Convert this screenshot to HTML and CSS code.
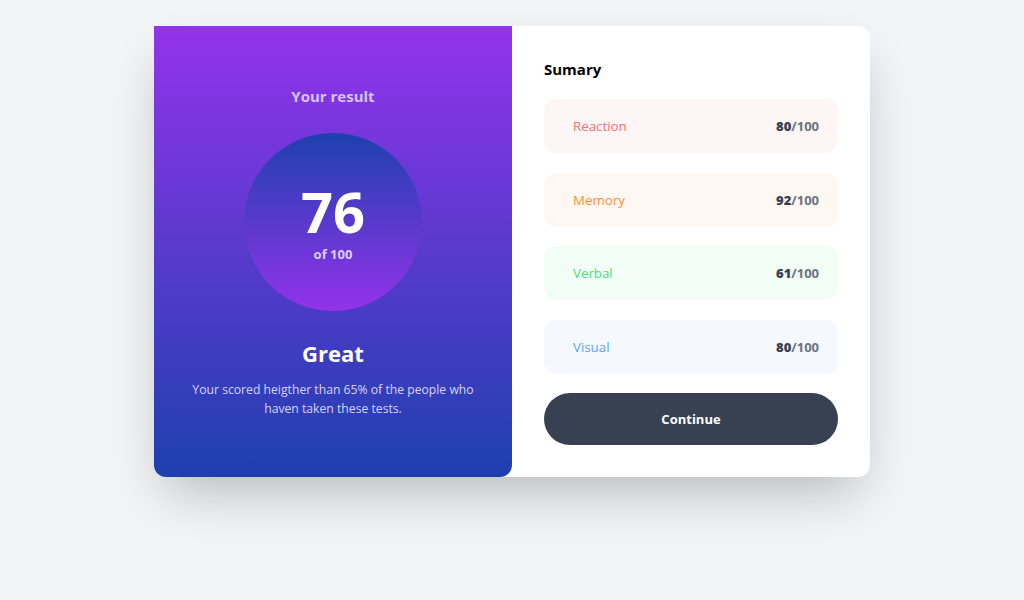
FILE: index.html
```html
<!DOCTYPE html>
<html lang="en">
<head>
<meta charset="utf-8">
<title>Results summary</title>
<link rel="stylesheet" href="styles.css">
</head>
<body>
<main class="page">
  <section class="card">
    <div class="result">
      <h2 class="result-title">Your result</h2>
      <div class="score-circle">
        <span class="score">76</span>
        <span class="score-of">of 100</span>
      </div>
      <h3 class="verdict">Great</h3>
      <p class="verdict-text">Your scored heigther than 65% of the people who haven taken these tests.</p>
    </div>
    <div class="summary">
      <h2 class="summary-title">Sumary</h2>
      <ul class="list">
        <li class="item item-red"><span class="label">Reaction</span><span class="value"><b>80</b>/100</span></li>
        <li class="item item-orange"><span class="label">Memory</span><span class="value"><b>92</b>/100</span></li>
        <li class="item item-green"><span class="label">Verbal</span><span class="value"><b>61</b>/100</span></li>
        <li class="item item-blue"><span class="label">Visual</span><span class="value"><b>80</b>/100</span></li>
      </ul>
      <button class="continue">Continue</button>
    </div>
  </section>
</main>
</body>
</html>
```

FILE: styles.css
```css
* { box-sizing: border-box; }
html, body { margin: 0; padding: 0; }
body {
  background: #f3f4f6;
  font-family: "Open Sans", "Noto Sans", "Liberation Sans", sans-serif;
  width: 1024px;
  height: 600px;
}
.page {
  display: flex;
  justify-content: center;
  padding-top: 26px;
}
.card {
  width: 716px;
  height: 451px;
  display: flex;
  background: #fff;
  border-radius: 0 12px 12px 12px;
  box-shadow: 0 25px 50px -12px rgba(0, 0, 0, 0.25);
}
.result {
  width: 358px;
  background: linear-gradient(to bottom, #9333ea, #1e40af);
  border-radius: 0 0 12px 12px;
  display: flex;
  flex-direction: column;
  align-items: center;
  padding-top: 60px;
}
.result-title {
  margin: 0;
  font-size: 15px;
  font-weight: 700;
  line-height: 20px;
  color: #d8c3f8;
}
.score-circle {
  width: 178px;
  height: 178px;
  border-radius: 50%;
  margin-top: 27px;
  background: linear-gradient(to bottom, #1e40af, #9333ea);
  display: flex;
  flex-direction: column;
  align-items: center;
  justify-content: center;
}
.score {
  font-size: 56px;
  font-weight: 700;
  color: #fff;
  line-height: 60px;
}
.score-of {
  font-size: 13px;
  font-weight: 700;
  color: #ddd0fb;
  line-height: 18px;
  margin-top: 4px;
}
.verdict {
  margin: 27px 0 0;
  font-size: 22px;
  font-weight: 700;
  color: #fff;
  line-height: 30px;
}
.verdict-text {
  margin: 12px 0 0;
  width: 300px;
  text-align: center;
  font-size: 12.2px;
  line-height: 19px;
  color: #d9d2f6;
}
.summary {
  flex: 1;
  padding: 32px 32px 32px 32px;
  display: flex;
  flex-direction: column;
}
.summary-title {
  margin: 0;
  font-size: 15px;
  font-weight: 700;
  line-height: 22px;
  color: #000;
}
.list {
  list-style: none;
  margin: 19px 0 0;
  padding: 0;
  display: flex;
  flex-direction: column;
  gap: 19.5px;
}
.item {
  height: 54px;
  border-radius: 12px;
  display: flex;
  align-items: center;
  justify-content: space-between;
  padding: 0 19px 0 29px;
  font-size: 13.3px;
}
.label { line-height: 18px; }
.value {
  font-weight: 700;
  color: #6b7280;
  font-size: 13px;
}
.value b { color: #374151; }
.item-red { background: #fef6f6; }
.item-red .label { color: #f87171; }
.item-orange { background: #fff7f2; }
.item-orange .label { color: #fb923c; }
.item-green { background: #f2fdf5; }
.item-green .label { color: #4ade80; }
.item-blue { background: #f5f8fe; }
.item-blue .label { color: #60a5fa; }
.continue {
  margin-top: 19px;
  height: 52px;
  border: 0;
  border-radius: 26px;
  background: #374151;
  color: #fff;
  font-family: inherit;
  font-size: 13px;
  font-weight: 700;
  cursor: pointer;
}
```
